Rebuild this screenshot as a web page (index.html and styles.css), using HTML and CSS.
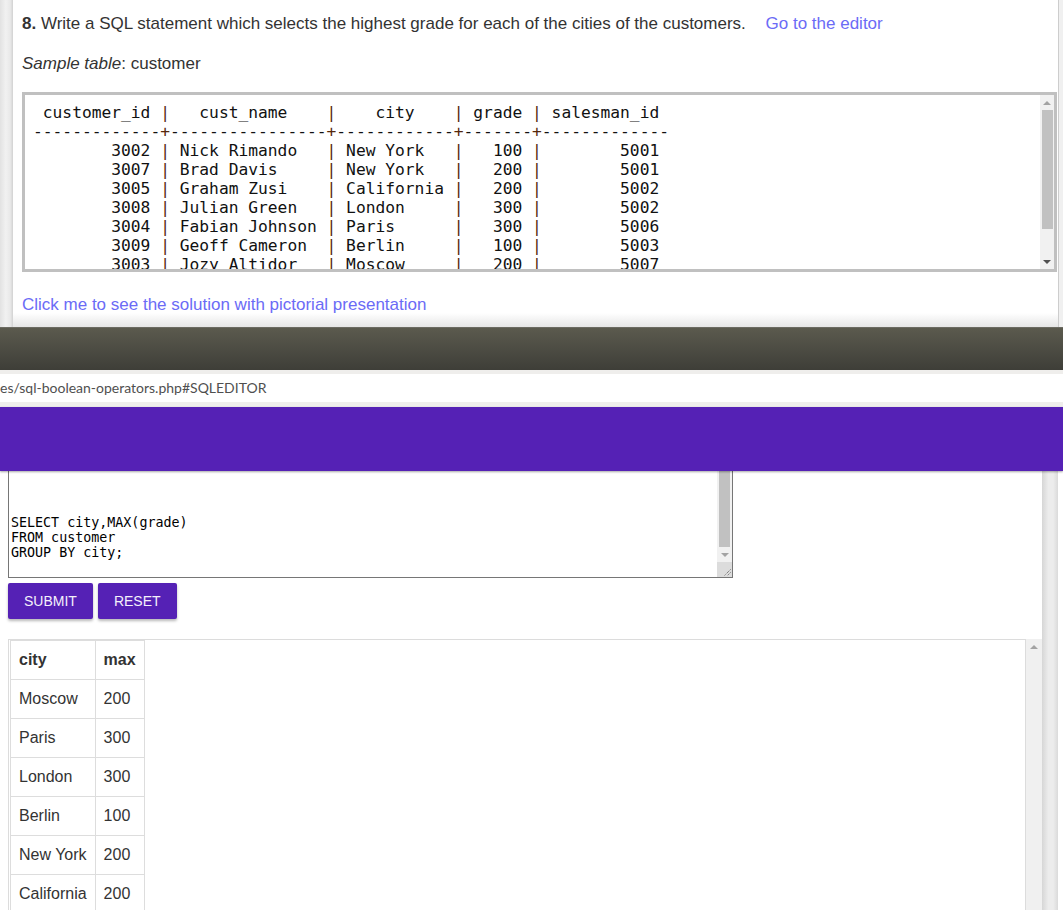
FILE: index.html
```html
<!DOCTYPE html>
<html lang="en">
<head>
<meta charset="utf-8">
<title>SQL exercise</title>
<link rel="stylesheet" href="styles.css">
</head>
<body>
<div class="top">
  <div class="side-strip"></div>
  <div class="content">
    <p class="question"><b>8.</b> Write a SQL statement which selects the highest grade for each of the cities of the customers. <a class="link go" href="#">Go to the editor</a></p>
    <p class="sample"><i>Sample table</i>: customer</p>
    <div class="sample-box">
<pre class="sample-pre"> customer_id <span class="p">|</span>   cust_name    <span class="p">|</span>    city    <span class="p">|</span> grade <span class="p">|</span> salesman_id
-------------<span class="p">+</span>----------------<span class="p">+</span>------------<span class="p">+</span>-------<span class="p">+</span>-------------
        3002 <span class="p">|</span> Nick Rimando   <span class="p">|</span> New York   <span class="p">|</span>   100 <span class="p">|</span>        5001
        3007 <span class="p">|</span> Brad Davis     <span class="p">|</span> New York   <span class="p">|</span>   200 <span class="p">|</span>        5001
        3005 <span class="p">|</span> Graham Zusi    <span class="p">|</span> California <span class="p">|</span>   200 <span class="p">|</span>        5002
        3008 <span class="p">|</span> Julian Green   <span class="p">|</span> London     <span class="p">|</span>   300 <span class="p">|</span>        5002
        3004 <span class="p">|</span> Fabian Johnson <span class="p">|</span> Paris      <span class="p">|</span>   300 <span class="p">|</span>        5006
        3009 <span class="p">|</span> Geoff Cameron  <span class="p">|</span> Berlin     <span class="p">|</span>   100 <span class="p">|</span>        5003
        3003 <span class="p">|</span> Jozy Altidor   <span class="p">|</span> Moscow     <span class="p">|</span>   200 <span class="p">|</span>        5007
        3001 <span class="p">|</span> Brad Guzan     <span class="p">|</span> London     <span class="p">|</span>       <span class="p">|</span>        5005</pre>
      <div class="sbar">
        <div class="sbtn"><span class="tri-up"></span></div>
        <div class="sthumb"></div>
        <div class="strack"></div>
        <div class="sbtn"><span class="tri-down dark"></span></div>
      </div>
    </div>
    <p class="solution"><a class="link" href="#">Click me to see the solution with pictorial presentation</a></p>
  </div>
  <div class="right-strip"></div>
</div>

<div class="titlebar"></div>
<div class="urlbar"><div class="url">es/sql-boolean-operators.php#SQLEDITOR</div></div>
<div class="purple"></div>

<div class="bottom">
  <div class="main">
    <div class="editor">
<pre class="code">SELECT city,MAX(grade)
FROM customer
GROUP BY city;</pre>
      <div class="ebar">
        <div class="ethumb"></div>
        <div class="ebtn"><span class="tri-down"></span></div>
        <div class="resizer">
          <svg width="15" height="15" viewBox="0 0 15 15"><path d="M13.5 7.5 L7.5 13.5 M13.5 10.5 L10.5 13.5" stroke="#555" stroke-width="1" stroke-dasharray="1 1" fill="none"/></svg>
        </div>
      </div>
    </div>
    <div class="buttons">
      <button class="btn" type="button">SUBMIT</button>
      <button class="btn" type="button">RESET</button>
    </div>
    <div class="result">
      <div class="result-box">
        <table class="res-table">
          <tr><th>city</th><th>max</th></tr>
          <tr><td>Moscow</td><td>200</td></tr>
          <tr><td>Paris</td><td>300</td></tr>
          <tr><td>London</td><td>300</td></tr>
          <tr><td>Berlin</td><td>100</td></tr>
          <tr><td>New York</td><td>200</td></tr>
          <tr><td>California</td><td>200</td></tr>
        </table>
      </div>
      <div class="rbar"><div class="rbtn"><span class="tri-up"></span></div></div>
    </div>
  </div>
  <div class="page-strip"></div>
  <div class="edge"></div>
</div>
</body>
</html>
```

FILE: styles.css
```css
* { box-sizing: border-box; }
html, body { margin: 0; padding: 0; }
body {
  width: 1063px;
  height: 910px;
  overflow: hidden;
  background: #fff;
  color: #333;
  font-family: "Liberation Sans", Arial, sans-serif;
}

/* ---------- top page ---------- */
.top { display: flex; height: 327px; }
.side-strip {
  width: 13px;
  background: linear-gradient(to right, #e2e2e2, #f1f1f1 45%, #e8e8e8 80%, #d2d2d2);
}
.content {
  flex: 1;
  padding: 14px 1px 0 9px;
  font-size: 17px;
  line-height: 20px;
  background: linear-gradient(to bottom, #fff 0, #fff 313px, #e6e6e6 327px);
}
.right-strip {
  width: 5px;
  border-left: 1px solid #cdcdcd;
  background: #f0f0f0;
}
.question, .sample, .solution { margin: 0; }
.sample { margin-top: 20px; }
.solution { margin-top: 23px; }
.link { color: #6b6bf6; text-decoration: none; }
.go { margin-left: 15px; }

.sample-box {
  margin-top: 18px;
  height: 180px;
  border: 3px solid #c0c0c0;
  display: flex;
  background: #fff;
}
.sample-pre {
  flex: 1;
  margin: 0;
  padding: 8px 8px;
  overflow: hidden;
  white-space: pre;
  font-family: "DejaVu Sans Mono", monospace;
  font-size: 16.25px;
  line-height: 19px;
  color: #111;
}
.sample-pre .p { color: #55270b; }

.sbar {
  width: 14px;
  background: #f1f1f1;
  display: flex;
  flex-direction: column;
}
.sbtn { height: 15px; display: flex; align-items: center; justify-content: center; }
.sthumb { height: 119px; margin: 0 1px 0 2px; background: #c1c1c1; }
.strack { flex: 1; }

.tri-up, .tri-down {
  width: 0; height: 0;
  border-left: 4px solid transparent;
  border-right: 4px solid transparent;
}
.tri-up { border-bottom: 4px solid #a3a3a3; }
.tri-down { border-top: 4px solid #a3a3a3; }
.tri-down.dark { border-top-color: #505050; }

/* ---------- browser chrome ---------- */
.titlebar {
  height: 43px;
  border-top: 1px solid #6c6b62;
  background: linear-gradient(to bottom, #5b5a4e, #3e3e38);
}
.urlbar { background: #efeeec; padding: 4px 0 5px; }
.url {
  height: 28px;
  background: #fff;
  line-height: 28px;
  font-family: "Lato", "Noto Sans", sans-serif;
  font-size: 14px;
  color: #4f4f4f;
  white-space: nowrap;
}
.purple {
  height: 64px;
  background: #5521b5;
  box-shadow: 0 1px 2px rgba(0, 0, 0, 0.35);
  position: relative;
  z-index: 1;
}

/* ---------- editor page ---------- */
.bottom { display: flex; height: 439px; }
.main { flex: 1; padding-left: 8px; }
.page-strip {
  width: 16px;
  background: linear-gradient(to right, #d6d6d6, #ececec 40%, #ececec 70%, #dadada);
}
.edge { width: 5px; }

.editor {
  width: 725px;
  height: 107px;
  border: 1px solid #767676;
  border-top: 0;
  display: flex;
}
.code {
  flex: 1;
  margin: 0;
  padding: 44px 2px 0;
  font-family: "DejaVu Sans Mono", monospace;
  font-size: 13.33px;
  line-height: 15px;
  color: #000;
  white-space: pre;
  overflow: hidden;
}
.ebar {
  width: 15px;
  background: #f1f1f1;
  display: flex;
  flex-direction: column;
}
.ethumb { flex: 1; margin: 0 2px; background: #c1c1c1; }
.ebtn { height: 15px; display: flex; align-items: center; justify-content: center; }
.resizer { height: 15px; background: #dcdcdc; }
.resizer svg { display: block; }

.buttons { display: flex; gap: 5px; margin-top: 5px; }
.btn {
  height: 36px;
  padding: 0 16px;
  border: 0;
  border-radius: 2px;
  background: #5521b5;
  color: #f4f0fb;
  font-family: "Liberation Sans", Arial, sans-serif;
  font-size: 14px;
  box-shadow: 0 2px 3px rgba(0, 0, 0, 0.28);
}

.result { display: flex; margin-top: 20px; height: 300px; }
.result-box {
  flex: 1;
  padding-left: 1px;
  border: 1px solid #dcdcdc;
  border-bottom: 0;
}
.res-table {
  border-collapse: collapse;
  font-size: 16px;
  line-height: 22px;
  color: #333;
}
.res-table th, .res-table td {
  border: 1px solid #dddddd;
  padding: 8px;
  text-align: left;
}
.res-table th { font-weight: bold; }
.rbar { width: 16px; background: #f0f0f0; }
.rbtn { height: 16px; display: flex; align-items: center; justify-content: center; }
```
